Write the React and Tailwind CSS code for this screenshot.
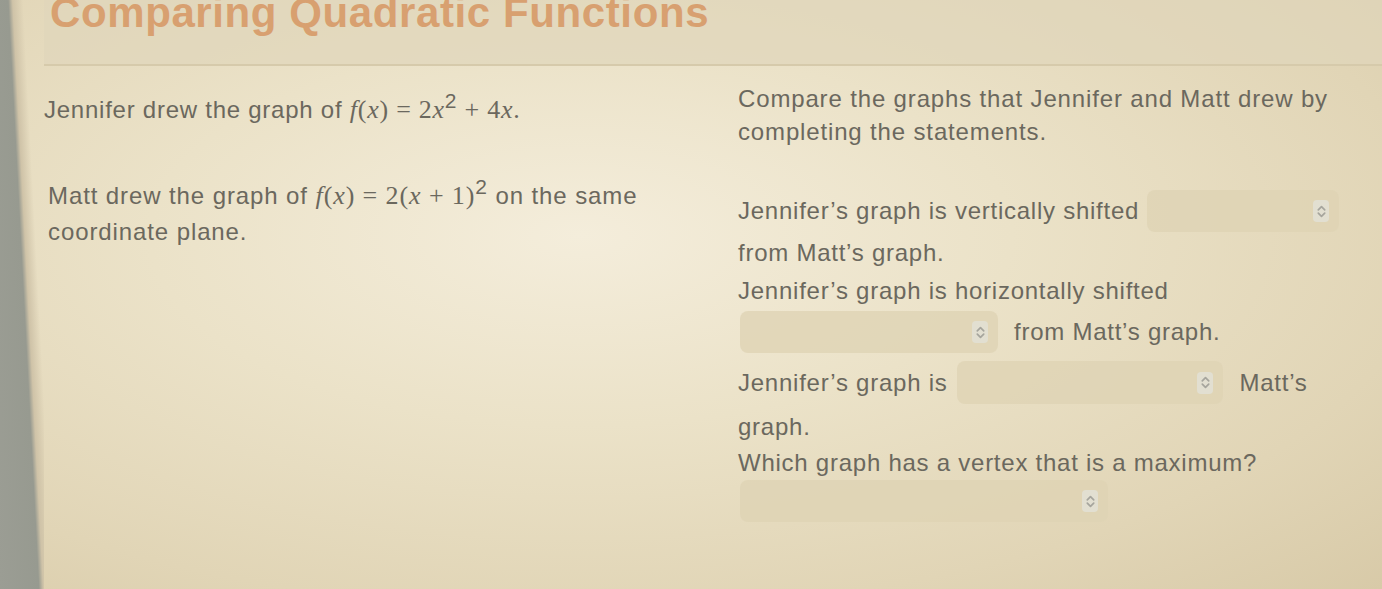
import React from "react";

const sans = { fontFamily: '"Liberation Sans", Arial, sans-serif' };

function Chevron() {
  return (
    <span className="flex h-[22px] w-[16px] items-center justify-center rounded-sm bg-[#e2dfd1]">
      <svg width="11" height="15" viewBox="0 0 10 14" fill="none">
        <path d="M2 5.5 L5 2.5 L8 5.5" stroke="#a6a59d" strokeWidth="1.6" strokeLinecap="round" strokeLinejoin="round" />
        <path d="M2 8.5 L5 11.5 L8 8.5" stroke="#a6a59d" strokeWidth="1.6" strokeLinecap="round" strokeLinejoin="round" />
      </svg>
    </span>
  );
}

function Select({ className }) {
  return (
    <div className={"flex items-center justify-end rounded-lg bg-[#ded3b4]/80 pr-[10px] " + className}>
      <Chevron />
    </div>
  );
}

const serif = { fontFamily: '"Liberation Serif", "Times New Roman", serif' };

function M({ children }) {
  return <span className="text-[26px] italic" style={serif}>{children}</span>;
}
function N({ children }) {
  return <span className="text-[26px]" style={serif}>{children}</span>;
}

export default function App() {
  return (
    <div
      className="relative flex h-[589px] w-[1382px] overflow-hidden bg-[radial-gradient(ellipse_at_42%_40%,#f4eddb_0%,#ebe2c8_38%,#e1d5b6_75%,#d8caa8_100%)] text-[24px] tracking-[0.75px] text-[#6b685e]"
      style={sans}
    >
      <div className="h-full w-[44px] shrink-0 bg-[linear-gradient(87deg,#9b9d94_0%,#979a90_52%,#cfc3a8_58%,transparent_72%)]" />
      <div className="flex min-w-0 flex-1 flex-col">
        <div className="h-[66px] shrink-0 border-b-2 border-[#d6caab] bg-[#dfd6ba]/70 pl-[6px]">
          <div className="mt-[-8px] text-[42px] font-bold leading-none tracking-[0.6px] text-[#d8a070]">
            Comparing Quadratic Functions
          </div>
        </div>
        <div className="flex flex-1">
          <div className="w-[694px] shrink-0 pt-[27px]">
            <p className="leading-[33px]">
              Jennifer drew the graph of <M>f</M>
              <N>(</N>
              <M>x</M>
              <N>) = 2</N>
              <M>x</M>
              <sup className="text-[21px]">2</sup>
              <N> + 4</N>
              <M>x</M>
              <N>.</N>
            </p>
            <p className="mt-[52px] pl-[4px] leading-[36px] tracking-[0.9px]">
              Matt drew the graph of <M>f</M>
              <N>(</N>
              <M>x</M>
              <N>) = 2(</N>
              <M>x</M>
              <N> + 1)</N>
              <sup className="text-[21px]">2</sup> on the same
              <br />
              coordinate plane.
            </p>
          </div>
          <div className="flex-1 pt-[16px]">
            <p className="leading-[33px] tracking-[0.85px]">
              Compare the graphs that Jennifer and Matt drew by
              <br />
              completing the statements.
            </p>
            <div className="mt-[42px] flex h-[42px] items-center">
              <span>Jennifer’s graph is vertically shifted</span>
              <Select className="ml-[8px] h-[42px] w-[192px]" />
            </div>
            <div className="mt-[4px] leading-[33px]">from Matt’s graph.</div>
            <div className="mt-[5px] leading-[33px]">Jennifer’s graph is horizontally shifted</div>
            <div className="mt-[4px] flex h-[42px] items-center">
              <Select className="ml-[2px] h-[42px] w-[258px]" />
              <span className="ml-[16px]">from Matt’s graph.</span>
            </div>
            <div className="mt-[8px] flex h-[43px] items-center">
              <span>Jennifer’s graph is</span>
              <Select className="ml-[10px] h-[43px] w-[266px]" />
              <span className="ml-[16px]">Matt’s</span>
            </div>
            <div className="mt-[6px] leading-[33px]">graph.</div>
            <div className="mt-[3px] leading-[33px]">Which graph has a vertex that is a maximum?</div>
            <Select className="ml-[2px] mt-[1px] h-[42px] w-[368px]" />
          </div>
        </div>
      </div>
    </div>
  );
}
